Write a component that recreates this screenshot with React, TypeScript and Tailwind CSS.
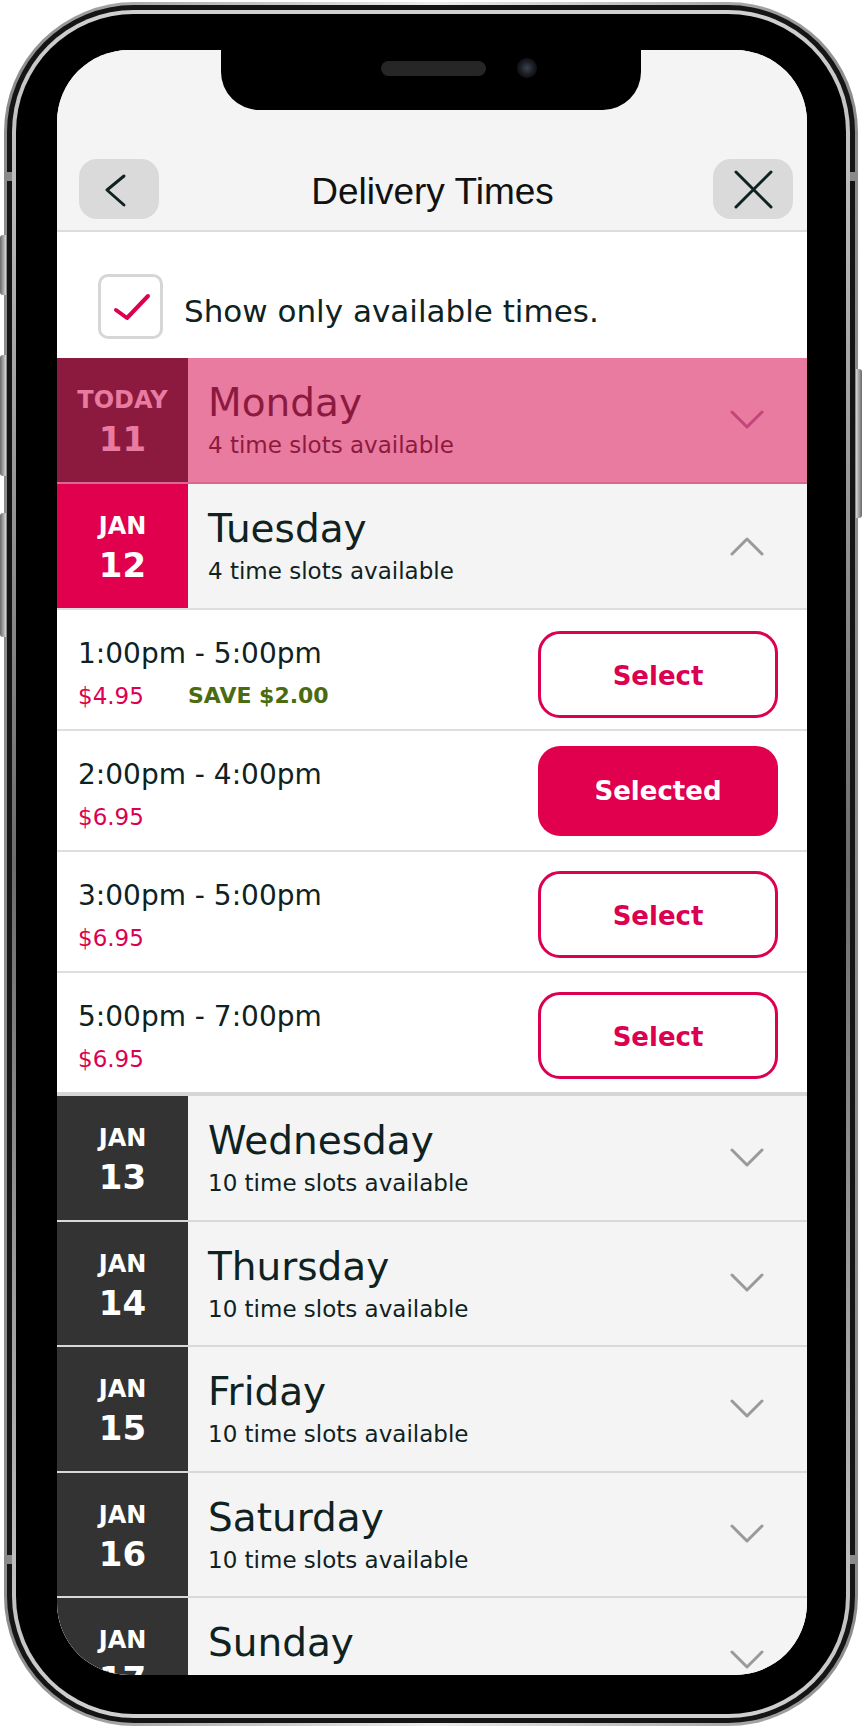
import React from 'react';

type Slot = { time: string; price: string; save?: string; selected?: boolean };
type Day = { month: string; date: string; name: string; count: string };

const slots: Slot[] = [
  { time: '1:00pm - 5:00pm', price: '$4.95', save: 'SAVE $2.00' },
  { time: '2:00pm - 4:00pm', price: '$6.95', selected: true },
  { time: '3:00pm - 5:00pm', price: '$6.95' },
  { time: '5:00pm - 7:00pm', price: '$6.95' },
];

const laterDays: Day[] = [
  { month: 'JAN', date: '13', name: 'Wednesday', count: '10 time slots available' },
  { month: 'JAN', date: '14', name: 'Thursday', count: '10 time slots available' },
  { month: 'JAN', date: '15', name: 'Friday', count: '10 time slots available' },
  { month: 'JAN', date: '16', name: 'Saturday', count: '10 time slots available' },
  { month: 'JAN', date: '17', name: 'Sunday', count: '10 time slots available' },
];

function Chevron({ up, color }: { up?: boolean; color: string }) {
  return (
    <svg width="34" height="20" viewBox="0 0 34 20" fill="none" className="shrink-0">
      <path
        d={up ? 'M2 18 L17 3 L32 18' : 'M2 2 L17 17 L32 2'}
        stroke={color}
        strokeWidth="3"
        strokeLinecap="round"
        strokeLinejoin="round"
      />
    </svg>
  );
}

function DayRow({ day }: { day: Day }) {
  return (
    <div className="flex h-[125.5px] shrink-0 border-b-2 border-[#d9d9d9] bg-[#f4f4f4]">
      <div className="flex w-[131px] shrink-0 flex-col items-center bg-[#333333] pt-[30px] font-bold text-white">
        <span className="text-[24px] leading-none">{day.month}</span>
        <span className="mt-[10px] text-[34px] leading-none">{day.date}</span>
      </div>
      <div className="flex-1 pl-[20px] pt-[23px] text-[#0f2222]">
        <div className="text-[39px] leading-[44px]">{day.name}</div>
        <div className="mt-[6px] text-[23px] leading-[28px]">{day.count}</div>
      </div>
      <div className="mr-[43px] self-center">
        <Chevron color="#9a9a9a" />
      </div>
    </div>
  );
}

function SlotRow({ slot, first, last }: { slot: Slot; first: boolean; last: boolean }) {
  return (
    <div
      className={
        last
          ? 'flex h-[123px] shrink-0 items-start border-b-4 border-[#d6d6d6] bg-white'
          : 'flex h-[121px] shrink-0 items-start border-b-2 border-[#dedede] bg-white'
      }
    >
      <div className="flex-1 pl-[21px] pt-[30px]">
        <div className="text-[28px] leading-none text-[#0f2222]">{slot.time}</div>
        <div className="mt-[17px] flex text-[23px] leading-none">
          <span className="w-[110px] text-[#dc0050]">{slot.price}</span>
          {slot.save && <span className="text-[22px] font-bold text-[#4a6b10]">{slot.save}</span>}
        </div>
      </div>
      {slot.selected ? (
        <button className="mr-[29px] mt-[15px] flex h-[90px] w-[240px] items-center justify-center rounded-[22px] bg-[#e0004d] text-[26px] font-bold text-white">
          Selected
        </button>
      ) : (
        <button
          className={
            first
              ? 'mr-[29px] mt-[21px] flex h-[87px] w-[240px] items-center justify-center rounded-[22px] border-[3px] border-[#dc0050] bg-white pt-[4px] text-[26px] font-bold text-[#dc0050]'
              : 'mr-[29px] mt-[19px] flex h-[87px] w-[240px] items-center justify-center rounded-[22px] border-[3px] border-[#dc0050] bg-white pt-[3px] text-[26px] font-bold text-[#dc0050]'
          }
        >
          Select
        </button>
      )}
    </div>
  );
}

function Screen() {
  return (
    <div className="relative flex h-[1625px] w-[750px] flex-col overflow-hidden rounded-[72px] bg-white font-['DejaVu_Sans',sans-serif]">
      {/* notch */}
      <div className="absolute left-[164px] top-0 z-10 h-[60px] w-[420px] rounded-b-[38px] bg-black">
        <div className="absolute left-[160px] top-[11px] h-[15px] w-[105px] rounded-full bg-[#262626]" />
        <div className="absolute left-[296px] top-[8px] h-[20px] w-[20px] rounded-full bg-[radial-gradient(circle,#3a4250_0%,#15181d_55%,#050505_100%)]" />
      </div>

      {/* header */}
      <div className="grid h-[182px] shrink-0 grid-cols-[80px_1fr_80px] items-end border-b-2 border-[#dcdcdc] bg-[#f4f4f4] pb-[11px] pl-[22px] pr-[14px]">
        <button className="flex h-[60px] w-[80px] items-center justify-center rounded-[18px] bg-[#dadada]">
          <svg width="80" height="60" viewBox="0 0 80 60" fill="none">
            <path d="M45 17 L28 31 L45 46" stroke="#0f2222" strokeWidth="3" strokeLinecap="round" strokeLinejoin="round" />
          </svg>
        </button>
        <div className="flex h-[60px] items-center justify-center pr-[7px] pt-[5px] font-['Liberation_Sans',sans-serif] text-[37px] text-[#111]">
          Delivery Times
        </div>
        <button className="flex h-[60px] w-[80px] items-center justify-center rounded-[18px] bg-[#dadada]">
          <svg width="80" height="60" viewBox="0 0 80 60" fill="none">
            <path d="M23 13 L58 48 M58 13 L23 48" stroke="#0f2222" strokeWidth="3" strokeLinecap="round" />
          </svg>
        </button>
      </div>

      {/* filter */}
      <div className="flex h-[126px] shrink-0 items-start bg-white pl-[41px] pt-[42px]">
        <div className="h-[65px] w-[65px] shrink-0 rounded-[10px] border-[3px] border-[#d6d6d6] bg-white">
          <svg width="59" height="59" viewBox="0 0 59 59" fill="none">
            <path d="M15 33 L26 41 L47 19" stroke="#dc0050" strokeWidth="4" strokeLinecap="round" strokeLinejoin="round" />
          </svg>
        </div>
        <span className="ml-[21px] mt-[22px] text-[31px] leading-none text-[#0f2222]">Show only available times.</span>
      </div>

      {/* today */}
      <div className="flex h-[126px] shrink-0 border-b-2 border-[#d96791] bg-[#e97aa0]">
        <div className="flex w-[131px] shrink-0 flex-col items-center bg-[#8b1a3e] pt-[30px] font-bold text-[#e97aa0]">
          <span className="text-[24px] leading-none">TODAY</span>
          <span className="mt-[10px] text-[34px] leading-none">11</span>
        </div>
        <div className="flex-1 pl-[20px] pt-[23px] text-[#8b1a3e]">
          <div className="text-[39px] leading-[44px]">Monday</div>
          <div className="mt-[6px] text-[23px] leading-[28px]">4 time slots available</div>
        </div>
        <div className="mr-[43px] self-center">
          <Chevron color="#c2467a" />
        </div>
      </div>

      {/* tomorrow, expanded */}
      <div className="flex h-[126px] shrink-0 border-b-2 border-[#dedede] bg-[#f4f4f4]">
        <div className="flex w-[131px] shrink-0 flex-col items-center bg-[#e0004d] pt-[30px] font-bold text-white">
          <span className="text-[24px] leading-none">JAN</span>
          <span className="mt-[10px] text-[34px] leading-none">12</span>
        </div>
        <div className="flex-1 pl-[20px] pt-[23px] text-[#0f2222]">
          <div className="text-[39px] leading-[44px]">Tuesday</div>
          <div className="mt-[6px] text-[23px] leading-[28px]">4 time slots available</div>
        </div>
        <div className="mr-[43px] self-center">
          <Chevron up color="#9a9a9a" />
        </div>
      </div>

      {slots.map((s, i) => (
        <SlotRow key={s.time} slot={s} first={i === 0} last={i === slots.length - 1} />
      ))}

      {laterDays.map((d) => (
        <DayRow key={d.date} day={d} />
      ))}
    </div>
  );
}

export default function App() {
  return (
    <div className="relative h-[1728px] w-[862px] overflow-hidden bg-white">
      {/* side buttons */}
      <div className="absolute left-0 top-[235px] h-[60px] w-[6px] rounded-l-[3px] bg-gradient-to-r from-[#6a6a6a] to-[#d8d8d8]" />
      <div className="absolute left-0 top-[355px] h-[121px] w-[6px] rounded-l-[3px] bg-gradient-to-r from-[#6a6a6a] to-[#d8d8d8]" />
      <div className="absolute left-0 top-[513px] h-[124px] w-[6px] rounded-l-[3px] bg-gradient-to-r from-[#6a6a6a] to-[#d8d8d8]" />
      <div className="absolute right-0 top-[369px] h-[149px] w-[6px] rounded-r-[3px] bg-gradient-to-l from-[#6a6a6a] to-[#d8d8d8]" />

      <div className="ml-[4px] mt-[2px] h-[1724px] w-[854px] rounded-[130px] bg-gradient-to-r from-[#8c8c8c] via-[#ededed] to-[#8c8c8c] p-[3px]">
        <div className="h-full w-full rounded-[127px] bg-[#151515] p-[5px]">
          <div className="h-full w-full rounded-[122px] bg-gradient-to-b from-[#d0d0d0] via-[#6d6d6d] to-[#d0d0d0] p-[4px]">
            <div className="relative h-full w-full rounded-[118px] bg-black px-[41px] pb-[39px] pt-[36px]">
              {/* antenna bands */}
              <div className="absolute -left-[12px] top-[158px] h-[9px] w-[8px] bg-[#8a8a8a]" />
              <div className="absolute -right-[12px] top-[158px] h-[9px] w-[8px] bg-[#8a8a8a]" />
              <div className="absolute -left-[12px] bottom-[150px] h-[9px] w-[8px] bg-[#8a8a8a]" />
              <div className="absolute -right-[12px] bottom-[150px] h-[9px] w-[8px] bg-[#8a8a8a]" />
              <Screen />
            </div>
          </div>
        </div>
      </div>
    </div>
  );
}
